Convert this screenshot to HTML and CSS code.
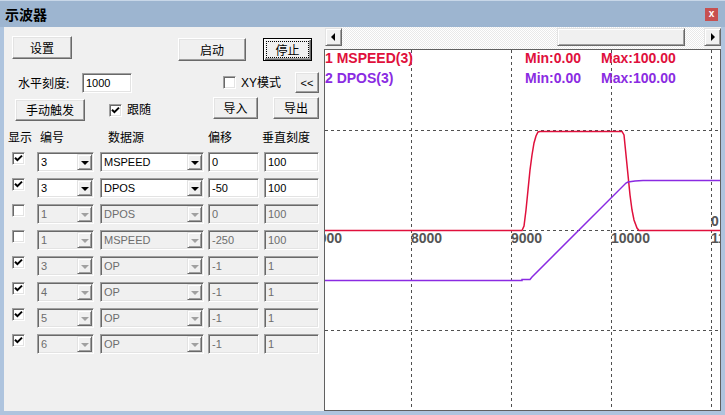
FILE: index.html
```html
<!DOCTYPE html>
<html lang="zh-CN">
<head>
<meta charset="utf-8">
<title>示波器</title>
<link rel="stylesheet" href="styles.css">
</head>
<body>
<div class="window">
  <div class="titlebar">
    <span class="title">示波器</span>
    <span class="close">x</span>
  </div>
  <div class="client">
    <div class="left">
      <div class="row row-a">
        <div class="btn btn-set">设置</div>
        <div class="btn btn-start">启动</div>
        <div class="btn btn-stop"><span class="focus">停止</span></div>
      </div>
      <div class="row row-b">
        <span class="lbl">水平刻度:</span>
        <div class="field scale-field"><span class="ftxt">1000</span></div>
        <label class="chk chk-xy"><span class="box"></span><span>XY模式</span></label>
        <div class="btn btn-small">&lt;&lt;</div>
      </div>
      <div class="row row-c">
        <div class="btn btn-trig">手动触发</div>
        <label class="chk chk-follow"><span class="box"><svg class="tick" width="9" height="9" viewBox="0 0 9 9"><path d="M1 3.8 L3.4 6.2 L8 1.6"/></svg></span><span>跟随</span></label>
        <div class="btn btn-imp">导入</div>
        <div class="btn btn-exp">导出</div>
      </div>
      <div class="head">
        <span class="h1">显示</span>
        <span class="h2">编号</span>
        <span class="h3">数据源</span>
        <span class="h4">偏移</span>
        <span class="h5">垂直刻度</span>
      </div>
      <div class="rows">
        <div class="trow">
          <span class="box cb"><svg class="tick" width="9" height="9" viewBox="0 0 9 9"><path d="M1 3.8 L3.4 6.2 L8 1.6"/></svg></span>
          <div class="combo c1"><span class="ftxt">3</span><span class="dd"><i class="arrow"></i></span></div>
          <div class="combo c2"><span class="ftxt">MSPEED</span><span class="dd"><i class="arrow"></i></span></div>
          <div class="field f1"><span class="ftxt">0</span></div>
          <div class="field f2"><span class="ftxt">100</span></div>
        </div>
        <div class="trow">
          <span class="box cb"><svg class="tick" width="9" height="9" viewBox="0 0 9 9"><path d="M1 3.8 L3.4 6.2 L8 1.6"/></svg></span>
          <div class="combo c1"><span class="ftxt">3</span><span class="dd"><i class="arrow"></i></span></div>
          <div class="combo c2"><span class="ftxt">DPOS</span><span class="dd"><i class="arrow"></i></span></div>
          <div class="field f1"><span class="ftxt">-50</span></div>
          <div class="field f2"><span class="ftxt">100</span></div>
        </div>
        <div class="trow off">
          <span class="box cb"></span>
          <div class="combo c1"><span class="ftxt">1</span><span class="dd"><i class="arrow"></i></span></div>
          <div class="combo c2"><span class="ftxt">DPOS</span><span class="dd"><i class="arrow"></i></span></div>
          <div class="field f1"><span class="ftxt">0</span></div>
          <div class="field f2"><span class="ftxt">100</span></div>
        </div>
        <div class="trow off">
          <span class="box cb"></span>
          <div class="combo c1"><span class="ftxt">1</span><span class="dd"><i class="arrow"></i></span></div>
          <div class="combo c2"><span class="ftxt">MSPEED</span><span class="dd"><i class="arrow"></i></span></div>
          <div class="field f1"><span class="ftxt">-250</span></div>
          <div class="field f2"><span class="ftxt">100</span></div>
        </div>
        <div class="trow off">
          <span class="box cb"><svg class="tick" width="9" height="9" viewBox="0 0 9 9"><path d="M1 3.8 L3.4 6.2 L8 1.6"/></svg></span>
          <div class="combo c1"><span class="ftxt">3</span><span class="dd"><i class="arrow"></i></span></div>
          <div class="combo c2"><span class="ftxt">OP</span><span class="dd"><i class="arrow"></i></span></div>
          <div class="field f1"><span class="ftxt">-1</span></div>
          <div class="field f2"><span class="ftxt">1</span></div>
        </div>
        <div class="trow off">
          <span class="box cb"><svg class="tick" width="9" height="9" viewBox="0 0 9 9"><path d="M1 3.8 L3.4 6.2 L8 1.6"/></svg></span>
          <div class="combo c1"><span class="ftxt">4</span><span class="dd"><i class="arrow"></i></span></div>
          <div class="combo c2"><span class="ftxt">OP</span><span class="dd"><i class="arrow"></i></span></div>
          <div class="field f1"><span class="ftxt">-1</span></div>
          <div class="field f2"><span class="ftxt">1</span></div>
        </div>
        <div class="trow off">
          <span class="box cb"><svg class="tick" width="9" height="9" viewBox="0 0 9 9"><path d="M1 3.8 L3.4 6.2 L8 1.6"/></svg></span>
          <div class="combo c1"><span class="ftxt">5</span><span class="dd"><i class="arrow"></i></span></div>
          <div class="combo c2"><span class="ftxt">OP</span><span class="dd"><i class="arrow"></i></span></div>
          <div class="field f1"><span class="ftxt">-1</span></div>
          <div class="field f2"><span class="ftxt">1</span></div>
        </div>
        <div class="trow off">
          <span class="box cb"><svg class="tick" width="9" height="9" viewBox="0 0 9 9"><path d="M1 3.8 L3.4 6.2 L8 1.6"/></svg></span>
          <div class="combo c1"><span class="ftxt">6</span><span class="dd"><i class="arrow"></i></span></div>
          <div class="combo c2"><span class="ftxt">OP</span><span class="dd"><i class="arrow"></i></span></div>
          <div class="field f1"><span class="ftxt">-1</span></div>
          <div class="field f2"><span class="ftxt">1</span></div>
        </div>
      </div>
    </div>
    <div class="right">
      <div class="hscroll">
        <div class="sbtn"><i class="sarrow sleft"></i></div>
        <div class="track"><div class="thumb"></div></div>
        <div class="sbtn"><i class="sarrow sright"></i></div>
      </div>
      <div class="chart">
        <svg class="plot" width="395" height="360" viewBox="0 0 395 360">
          <g class="grid">
            <line x1="86.5" y1="0" x2="86.5" y2="360"/>
            <line x1="186.5" y1="0" x2="186.5" y2="360"/>
            <line x1="286.5" y1="0" x2="286.5" y2="360"/>
            <line x1="386.5" y1="0" x2="386.5" y2="360"/>
            <line x1="0" y1="80.5" x2="393" y2="80.5"/>
            <line x1="0" y1="180.5" x2="393" y2="180.5"/>
            <line x1="0" y1="280.5" x2="393" y2="280.5"/>
          </g>
          <polyline class="trace-red" points="0,180.5 197,180.5 199,176 201,160 203,140 205,120 207,105 209,93 211,86 213,82 215,81.5 297,81.5 299,85 301,105 303,125 305,145 307,160 309,170 312,178 314,180.5 395,180.5"/>
          <polyline class="trace-purple" points="0,230.5 197,230.5 197,229.5 205,229.5 207,227 301,133 303,132 310,131 318,130.5 395,130.5"/>
          <text class="axis" x="-14" y="193">7000</text>
          <text class="axis" x="86" y="193">8000</text>
          <text class="axis" x="186" y="193">9000</text>
          <text class="axis" x="286" y="193">10000</text>
          <text class="axis" x="386" y="193">11000</text>
          <text class="axis" x="386" y="176">0</text>
          <text class="lab red" x="0" y="13">1 MSPEED(3)</text>
          <text class="lab red" x="200" y="13">Min:0.00</text>
          <text class="lab red" x="276" y="13">Max:100.00</text>
          <text class="lab purple" x="0" y="33">2 DPOS(3)</text>
          <text class="lab purple" x="200" y="33">Min:0.00</text>
          <text class="lab purple" x="276" y="33">Max:100.00</text>
        </svg>
      </div>
    </div>
  </div>
</div>
</body>
</html>
```

FILE: styles.css
```css
* { box-sizing: border-box; }
html, body { margin: 0; padding: 0; }
body {
  width: 725px;
  height: 415px;
  overflow: hidden;
  background: #fff;
  font-family: "Liberation Sans", "Noto Sans CJK SC", sans-serif;
  font-size: 12px;
  color: #000;
}
.window {
  width: 725px;
  height: 415px;
  display: flex;
  flex-direction: column;
  background: #aec4de;
  border-top: 1px solid #c8d7e8;
}
.titlebar {
  height: 26px;
  flex: none;
  background: #9db5d0;
  display: flex;
  align-items: center;
  padding: 0 7px 0 5px;
}
.title {
  flex: 1;
  font-family: "Noto Sans CJK SC", sans-serif;
  font-weight: bold;
  font-size: 14px;
  line-height: 16px;
}
.close {
  width: 13px;
  height: 13px;
  background: #c75050;
  color: #fff;
  font: bold 10px/12px "Liberation Sans", sans-serif;
  text-align: center;
}
.client {
  flex: 1;
  min-height: 0;
  display: flex;
  margin: 0 4px 4px 4px;
  background: #f0f0f0;
}

/* ---------- left panel ---------- */
.left {
  width: 320px;
  flex: none;
  display: flex;
  flex-direction: column;
}
.row { display: flex; flex: none; align-items: flex-start; }
.btn {
  display: flex;
  align-items: center;
  justify-content: center;
  background: #f0f0f0;
  border: 1px solid;
  border-color: #fff #696969 #696969 #fff;
  box-shadow: inset -1px -1px #a0a0a0, inset 1px 1px #e3e3e3;
  font-family: "Noto Sans CJK SC", sans-serif;
  font-size: 12px;
  line-height: 14px;
  flex: none;
}
.row-a { height: 34px; padding-top: 9px; }
.btn-set { width: 60px; height: 23px; margin-left: 8px; }
.btn-start { width: 68px; height: 23px; margin-left: 106px; margin-top: 2px; }
.btn-stop {
  width: 49px; height: 23px; margin-left: 17px; margin-top: 2px;
  border: 1px solid #000;
  box-shadow: inset 1px 1px #fff, inset -1px -1px #696969, inset -2px -2px #a0a0a0;
  padding: 2px;
}
.focus {
  width: 100%;
  height: 100%;
  border: 1px dotted #000;
  display: flex;
  align-items: center;
  justify-content: center;
}
.row-b { height: 21px; margin-top: 11px; align-items: center; }
.lbl {
  width: 64px;
  margin-left: 14px;
  font-family: "Noto Sans CJK SC", sans-serif;
  font-size: 12px;
  line-height: 14px;
}
.field, .combo {
  height: 20px;
  border: 1px solid;
  border-color: #a0a0a0 #fff #fff #a0a0a0;
  box-shadow: inset 1px 1px #696969, inset -1px -1px #e3e3e3;
  background: #fff;
  padding: 1px;
  display: flex;
  flex: none;
  font-family: "Liberation Sans", sans-serif;
  font-size: 11px;
  line-height: 16px;
}
.ftxt { flex: 1; padding-left: 2px; white-space: nowrap; overflow: hidden; }
.scale-field { width: 50px; }
.chk {
  display: flex;
  align-items: center;
  gap: 5px;
  font-size: 12px;
  line-height: 14px;
  flex: none;
}
.chk-xy { width: 72px; margin-left: 91px; }
.btn-small {
  width: 24px; height: 21px;
  font-family: "Liberation Sans", sans-serif;
  font-size: 11px;
}
.box {
  width: 13px;
  height: 13px;
  flex: none;
  border: 1px solid;
  border-color: #a0a0a0 #fff #fff #a0a0a0;
  box-shadow: inset 1px 1px #696969, inset -1px -1px #e3e3e3;
  background: #fff;
  display: flex;
  align-items: flex-start;
  justify-content: flex-start;
  padding: 1px 0 0 1px;
}
.tick path { fill: none; stroke: #000; stroke-width: 2; }
.row-c { height: 24px; margin-top: 4px; }
.btn-trig { width: 70px; height: 22px; margin-left: 11px; margin-top: 2px; }
.chk-follow { width: 104px; margin-left: 24px; margin-top: 6px; }
.btn-imp { width: 45px; height: 22px; }
.btn-exp { width: 46px; height: 22px; margin-left: 15px; }

.head {
  display: flex;
  flex: none;
  height: 16px;
  margin-top: 8px;
  font-family: "Noto Sans CJK SC", sans-serif;
  font-size: 12px;
  line-height: 16px;
}
.h1 { margin-left: 4px; width: 32px; }
.h2 { width: 68px; }
.h3 { width: 100px; }
.h4 { width: 54px; }

.rows {
  display: flex;
  flex-direction: column;
  gap: 6px;
  margin-top: 7px;
}
.trow { display: flex; align-items: flex-start; height: 20px; }
.cb { margin-left: 8px; }
.c1 { width: 57px; margin-left: 12px; }
.c2 { width: 104px; margin-left: 6px; }
.f1 { width: 51px; margin-left: 4px; }
.f2 { width: 55px; margin-left: 5px; }
.dd {
  width: 15px;
  height: 16px;
  flex: none;
  background: #f0f0f0;
  border: 1px solid;
  border-color: #e3e3e3 #696969 #696969 #e3e3e3;
  box-shadow: inset 1px 1px #fff, inset -1px -1px #a0a0a0;
  display: flex;
  align-items: center;
  justify-content: center;
}
.arrow {
  width: 0;
  height: 0;
  border-left: 4px solid transparent;
  border-right: 4px solid transparent;
  border-top: 4px solid #000;
  margin-top: 1px;
}
.off .combo, .off .field { background: #f0f0f0; color: #6d6d6d; }
.off .arrow { border-top-color: #a0a0a0; }

/* ---------- right panel ---------- */
.right {
  flex: 1;
  min-width: 0;
  display: flex;
  flex-direction: column;
}
.hscroll {
  height: 22px;
  flex: none;
  display: flex;
  padding-left: 1px;
}
.sbtn {
  width: 17px;
  height: 18px;
  margin-top: 1px;
  flex: none;
  background: #f0f0f0;
  border: 1px solid;
  border-color: #e3e3e3 #696969 #696969 #e3e3e3;
  box-shadow: inset 1px 1px #fff, inset -1px -1px #a0a0a0;
  display: flex;
  align-items: center;
  justify-content: center;
}
.sarrow { width: 0; height: 0; border-top: 4px solid transparent; border-bottom: 4px solid transparent; }
.sleft { border-right: 4px solid #000; margin-right: 1px; }
.sright { border-left: 4px solid #000; margin-left: 1px; }
.track {
  flex: 1;
  height: 22px;
  background-color: #f4f4f4;
  background-image: repeating-conic-gradient(#e9e9e9 0 25%, #ffffff 0 50%);
  background-size: 2px 2px;
}
.thumb {
  width: 128px;
  height: 18px;
  margin-top: 1px;
  margin-left: 215px;
  background: #f0f0f0;
  border: 1px solid;
  border-color: #e3e3e3 #696969 #696969 #e3e3e3;
  box-shadow: inset 1px 1px #fff, inset -1px -1px #a0a0a0;
}
.chart {
  flex: 1;
  border: 1px solid #606060;
  background: #fff;
  overflow: hidden;
}
.plot { display: block; }
.grid line { stroke: #505050; stroke-width: 1; stroke-dasharray: 3 3; }
.trace-red { fill: none; stroke: #e0103c; stroke-width: 1.5; }
.trace-purple { fill: none; stroke: #8a2be2; stroke-width: 1.5; }
.axis { fill: #555; font-family: "Liberation Sans", sans-serif; font-weight: bold; font-size: 14px; }
.lab { font-family: "Liberation Sans", sans-serif; font-weight: bold; font-size: 14px; }
.lab.red { fill: #e0103c; }
.lab.purple { fill: #8a2be2; }
```
